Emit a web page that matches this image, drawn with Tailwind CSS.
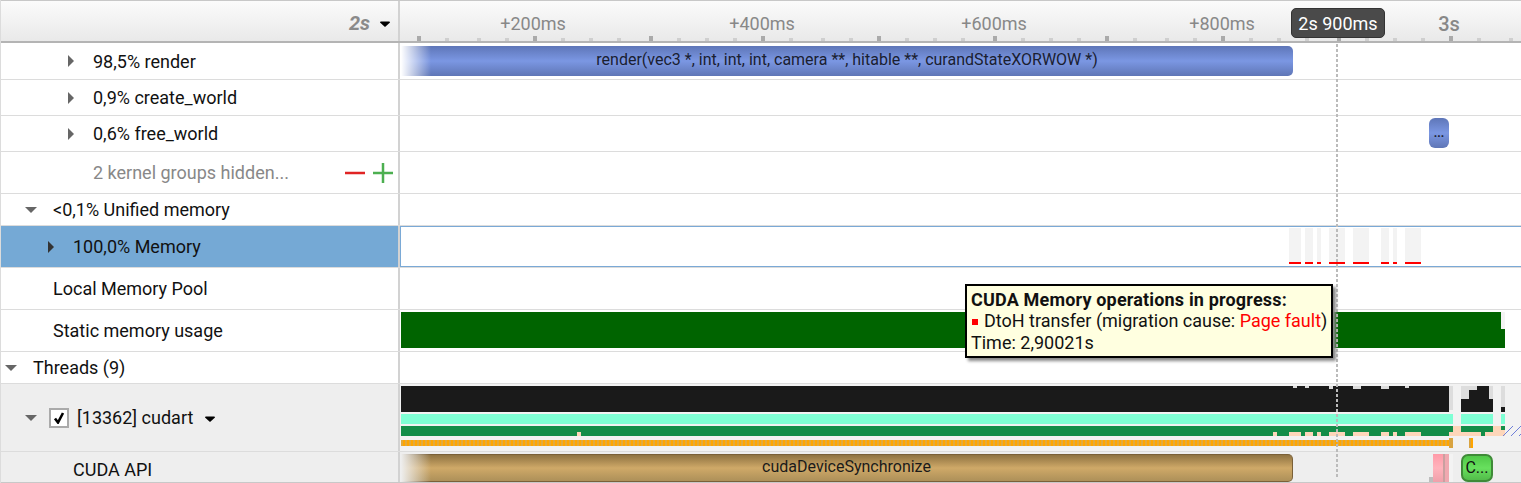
<!DOCTYPE html>
<html>
<head>
<meta charset="utf-8">
<script src="https://cdn.jsdelivr.net/npm/@tailwindcss/browser@4"></script>
</head>
<body class="bg-white">
<div class="relative w-[1521px] h-[483px] overflow-hidden border-l border-[#dcdcdc] font-[Roboto,sans-serif] text-[18px] text-[#111]">

  <!-- header -->
  <div class="flex h-[43px] border-t border-b-2 border-t-[#c8c8c8] border-b-[#b4b4b4] bg-gradient-to-b from-[#fbfbfb] to-[#e9e9e9]">
    <div class="flex w-[399px] items-center justify-end gap-[10px] border-r-2 border-[#d2d2d2] pr-[8px] pt-[3px]">
      <span class="text-[20px] font-bold italic text-[#8a8a8a]">2s</span>
      <svg class="mt-[2px]" width="10" height="6" viewBox="0 0 10 6"><path d="M0 1.5Q0 .5 1 .5H9Q10 .5 10 1.5L5 6Z" fill="#000"/></svg>
    </div>
    <div class="relative flex-1 text-[#888]">
      <span class="absolute left-[133px] top-[12px] -translate-x-1/2 leading-[22px]">+200ms</span>
      <span class="absolute left-[362px] top-[12px] -translate-x-1/2 leading-[22px]">+400ms</span>
      <span class="absolute left-[594px] top-[12px] -translate-x-1/2 leading-[22px]">+600ms</span>
      <span class="absolute left-[822px] top-[12px] -translate-x-1/2 leading-[22px]">+800ms</span>
      <span class="absolute left-[1049px] top-[12px] -translate-x-1/2 text-[20px] font-medium leading-[22px]">3s</span>
      <svg class="absolute bottom-0 left-0" width="1121" height="5" shape-rendering="crispEdges">
        <path fill="#aaaaaa" d="M17 0h4v5h-4zM133 0h4v5h-4zM249 0h4v5h-4zM361 0h4v5h-4zM477 0h4v5h-4zM593 0h4v5h-4zM705 0h4v5h-4zM821 0h4v5h-4zM937 0h4v5h-4zM1049 0h4v5h-4z"/>
        <path fill="#cfcfcf" d="M45 2h4v3h-4zM77 2h4v3h-4zM105 2h4v3h-4zM161 2h4v3h-4zM189 2h4v3h-4zM217 2h4v3h-4zM277 2h4v3h-4zM305 2h4v3h-4zM333 2h4v3h-4zM389 2h4v3h-4zM421 2h4v3h-4zM449 2h4v3h-4zM505 2h4v3h-4zM533 2h4v3h-4zM561 2h4v3h-4zM621 2h4v3h-4zM649 2h4v3h-4zM677 2h4v3h-4zM733 2h4v3h-4zM765 2h4v3h-4zM793 2h4v3h-4zM849 2h4v3h-4zM877 2h4v3h-4zM905 2h4v3h-4zM965 2h4v3h-4zM993 2h4v3h-4zM1021 2h4v3h-4zM1077 2h4v3h-4zM1109 2h4v3h-4z"/>
      </svg>
    </div>
  </div>

  <!-- render -->
  <div class="flex h-[37px] border-b border-[#dcdcdc]">
    <div class="flex w-[399px] items-center gap-[19px] border-r-2 border-[#d2d2d2] pl-[67px]">
      <svg width="6" height="12" viewBox="0 0 6 12"><path d="M0 0L6 6L0 12Z" fill="#666"/></svg>
      <span>98,5% render</span>
    </div>
    <div class="relative flex-1">
      <div class="absolute left-[1px] top-[3px] flex h-[30px] w-[892px] items-center justify-center rounded-r-[5px] bg-gradient-to-b from-[#5e76b8] via-[#7b97e3] to-[#5f76b6] pb-[3px] text-[16px] text-[#1a2030]">
        <span class="absolute inset-y-0 left-0 w-[30px] bg-gradient-to-r from-white to-white/0"></span>
        <span class="relative">render(vec3 *, int, int, int, camera **, hitable **, curandStateXORWOW *)</span>
      </div>
    </div>
  </div>

  <!-- create_world -->
  <div class="flex h-[36px] border-b border-[#dcdcdc]">
    <div class="flex w-[399px] items-center gap-[19px] border-r-2 border-[#d2d2d2] pl-[67px]">
      <svg width="6" height="12" viewBox="0 0 6 12"><path d="M0 0L6 6L0 12Z" fill="#666"/></svg>
      <span>0,9% create_world</span>
    </div>
    <div class="flex-1"></div>
  </div>

  <!-- free_world -->
  <div class="flex h-[36px] border-b border-[#dcdcdc]">
    <div class="flex w-[399px] items-center gap-[19px] border-r-2 border-[#d2d2d2] pl-[67px]">
      <svg width="6" height="12" viewBox="0 0 6 12"><path d="M0 0L6 6L0 12Z" fill="#666"/></svg>
      <span>0,6% free_world</span>
    </div>
    <div class="relative flex-1">
      <div class="absolute left-[1029px] top-[2px] flex h-[30px] w-[20px] items-center justify-center rounded-[6px] bg-gradient-to-b from-[#5e76b8] via-[#7b97e3] to-[#5f76b6] text-[12px] font-bold text-[#1a2030]">...</div>
    </div>
  </div>

  <!-- kernel groups -->
  <div class="flex h-[42px] border-b border-[#dcdcdc]">
    <div class="flex w-[399px] items-center border-r-2 border-[#d2d2d2] pl-[92px] pr-[5px] text-[#888]">
      <span class="flex-1">2 kernel groups hidden...</span>
      <svg class="mr-[8px]" width="20" height="20" viewBox="0 0 20 20"><rect y="8.75" width="20" height="2.5" fill="#e02424"/></svg>
      <svg width="20" height="20" viewBox="0 0 20 20"><path d="M0 8.75h8.75V0h2.5v8.75H20v2.5h-8.75V20h-2.5v-8.75H0z" fill="#4caf50"/></svg>
    </div>
    <div class="flex-1"></div>
  </div>

  <!-- unified memory -->
  <div class="flex h-[32px] border-b border-[#dcdcdc]">
    <div class="flex w-[399px] items-center gap-[16px] border-r-2 border-[#d2d2d2] pl-[24px]">
      <svg width="12" height="6" viewBox="0 0 12 6"><path d="M0 0H12L6 6Z" fill="#666"/></svg>
      <span>&lt;0,1% Unified memory</span>
    </div>
    <div class="flex-1"></div>
  </div>

  <!-- memory -->
  <div class="flex h-[42px] border-b border-[#dcdcdc]">
    <div class="flex w-[399px] items-center gap-[19px] border-r-2 border-[#d2d2d2] bg-[#75a9d5] pl-[47px]">
      <svg width="6" height="12" viewBox="0 0 6 12"><path d="M0 0L6 6L0 12Z" fill="#333"/></svg>
      <span>100,0% Memory</span>
    </div>
    <div class="relative flex-1 border-y border-l border-[#7aa9d6]">
      <svg class="absolute left-[-1px] top-[-1px]" width="1121" height="41" shape-rendering="crispEdges">
        <path fill="#f3f3f3" d="M889 2h12v34h-12zM905 2h8v34h-8zM917 2h4v34h-4zM929 2h16v34h-16zM953 2h16v34h-16zM981 2h8v34h-8zM993 2h4v34h-4zM1005 2h16v34h-16z"/>
        <path fill="#ff0000" d="M889 36h12v2h-12zM905 36h8v2h-8zM917 36h4v2h-4zM929 36h16v2h-16zM953 36h16v2h-16zM981 36h8v2h-8zM993 36h4v2h-4zM1005 36h16v2h-16z"/>
      </svg>
    </div>
  </div>

  <!-- local memory pool -->
  <div class="flex h-[42px] border-b border-[#dcdcdc]">
    <div class="flex w-[399px] items-center border-r-2 border-[#d2d2d2] pl-[52px]">Local Memory Pool</div>
    <div class="flex-1"></div>
  </div>

  <!-- static memory usage -->
  <div class="flex h-[42px] border-b border-[#dcdcdc]">
    <div class="flex w-[399px] items-center border-r-2 border-[#d2d2d2] pl-[52px]">Static memory usage</div>
    <div class="relative flex-1">
      <svg class="absolute left-0 top-0" width="1121" height="41" shape-rendering="crispEdges">
        <path fill="#f3f3f3" d="M1101 2h4v17h-4z"/>
        <path fill="#006400" d="M1 2h1100v17h4v19H1z"/>
      </svg>
    </div>
  </div>

  <!-- threads -->
  <div class="flex h-[32px] border-b border-[#dcdcdc]">
    <div class="flex w-[399px] items-center gap-[16px] border-r-2 border-[#d2d2d2] pl-[4px]">
      <svg width="12" height="6" viewBox="0 0 12 6"><path d="M0 0H12L6 6Z" fill="#666"/></svg>
      <span>Threads (9)</span>
    </div>
    <div class="flex-1"></div>
  </div>

  <!-- cudart -->
  <div class="flex h-[68px] border-b border-[#dcdcdc] bg-[#eeeeee]">
    <div class="flex w-[399px] items-center border-r-2 border-[#d2d2d2] pl-[24px]">
      <svg width="12" height="6" viewBox="0 0 12 6"><path d="M0 0H12L6 6Z" fill="#666"/></svg>
      <span class="ml-[12px] flex h-[20px] w-[20px] items-center justify-center border-2 border-[#aaaaaa] bg-white">
        <svg width="12" height="12" viewBox="0 0 12 12"><path d="M2 6.5L5 10.5L10 1" fill="none" stroke="#000" stroke-width="2.6"/></svg>
      </span>
      <span class="ml-[8px]">[13362] cudart</span>
      <svg class="ml-[12px] mt-[3px]" width="10" height="6" viewBox="0 0 10 6"><path d="M0 1.5Q0 .5 1 .5H9Q10 .5 10 1.5L5 6Z" fill="#000"/></svg>
    </div>
    <div class="relative flex-1 bg-[#f2f2f2]">
      <svg class="absolute left-0 top-0" width="1121" height="67" shape-rendering="crispEdges">
        <path fill="#1a1a1a" d="M1 2h1048v26H1zM1061 2h32v26h-32zM1101 23h4v5h-4z"/>
        <path fill="#dddddd" d="M893 2h4v2h-4zM905 2h4v2h-4zM929 2h4v3h-4zM953 2h8v3h-8zM981 2h8v3h-8zM1005 2h4v2h-4zM1049 2h4v24h-4zM1061 2h8v13h-8zM1069 2h8v4h-8zM1089 2h4v13h-4zM1101 2h4v21h-4z"/>
        <path fill="#7fffd4" d="M1 30h1052v10H1zM1061 30h32v10h-32zM1101 30h4v10h-4z"/>
        <path fill="#138d48" d="M1 42h1052v10H1zM1061 42h32v10h-32zM1101 42h4v4h-4z"/>
        <path fill="#fdd6ba" d="M177 48h4v4h-4zM873 48h4v4h-4zM889 48h12v4h-12zM905 48h8v4h-8zM917 48h4v4h-4zM929 48h16v4h-16zM953 48h16v4h-16zM981 48h8v4h-8zM993 48h4v4h-4zM1005 48h16v4h-16zM1049 48h32v4h-32zM1085 48h16v4h-16zM1053 42h8v6h-8zM1093 42h8v6h-8zM1101 46h4v6h-4z"/>
        <rect x="1" y="56" width="1048" height="6" fill="#e2a93c"/>
        <path fill="#d9a441" d="M1049 54h4v10h-4zM1069 54h2v10h-2z"/>
        <path fill="#ffa500" d="M1071 54h2v10h-2z"/>
      </svg>
      <div class="absolute left-[3px] top-[56px] h-[6px] w-[1046px] bg-[repeating-linear-gradient(90deg,#ffa500_0,#ffa500_2px,#e2a93c_2px,#e2a93c_4px)]"></div>
      <svg class="absolute left-[1103px] top-[42px]" width="18" height="10" viewBox="0 0 18 10"><path d="M0 10L10 0M8 10L18 0M16 10L18 8" stroke="#6f7fd8" stroke-width="1" fill="none"/></svg>
    </div>
  </div>

  <!-- cuda api -->
  <div class="flex h-[30px] bg-[#eeeeee]">
    <div class="flex w-[399px] items-center border-r-2 border-[#d2d2d2] pl-[72px] pt-[5px]">CUDA API</div>
    <div class="relative flex-1">
      <div class="absolute left-[1px] top-[2px] flex h-[28px] w-[892px] items-center justify-center rounded-r-[5px] border-y border-r border-[#7a6038] bg-gradient-to-b from-[#8f7342] via-[#cfa968] to-[#ad9059] pb-[2px] text-[16px] text-[#1a1a1a]">
        <span class="absolute inset-y-[-1px] left-0 w-[30px] bg-gradient-to-r from-[#eeeeee] to-[#eeeeee]/0"></span>
        <span class="relative">cudaDeviceSynchronize</span>
      </div>
      <div class="absolute left-[1029px] top-[25px] h-[5px] w-[4px] bg-[#bdbdbd]"></div>
      <div class="absolute left-[1033px] top-[2px] h-[28px] w-[10px] bg-gradient-to-b from-[#ff9aa8] via-[#ffb3bc] to-[#f0a0aa]"></div>
      <div class="absolute left-[1043px] top-[2px] h-[28px] w-[2px] bg-[#c9a0a0]"></div>
      <div class="absolute left-[1045px] top-[2px] h-[28px] w-[4px] bg-[#f0a8b0]"></div>
      <div class="absolute left-[1049px] top-[2px] h-[28px] w-[4px] bg-[#f3f3f3]"></div>
      <div class="absolute left-[1061px] top-[2px] flex h-[28px] w-[32px] items-center justify-center rounded-[7px] border-2 border-[#3f8a38] bg-gradient-to-b from-[#50c848] via-[#68e05e] to-[#52bc4a] text-[16px] text-[#111]">C...</div>
    </div>
  </div>

  <!-- bottom edge -->
  <div class="absolute bottom-0 left-0 h-px w-full bg-[#c8c8c8]"></div>

  <!-- cursor line -->
  <div class="absolute left-[1335px] top-[44px] h-[434px] w-[2px] bg-[repeating-linear-gradient(180deg,#bbbbbb_0,#bbbbbb_3px,transparent_3px,transparent_5px)]"></div>

  <!-- time badge -->
  <div class="absolute left-[1290px] top-[8px] flex h-[30px] w-[94px] items-center justify-center rounded-[5px] border border-[#333] bg-[#4a4a4a] text-[#fff]">2s 900ms</div>

  <!-- tooltip -->
  <div class="absolute left-[964px] top-[284px] h-[74px] w-[368px] border-2 border-black bg-[#ffffe0] pl-[5px] pt-[3px] text-[18px] leading-[21.5px] text-[#111] shadow-[3px_3px_3px_#888]">
    <div class="-ml-px font-bold tracking-[0.17px]">CUDA Memory operations in progress:</div>
    <div class="-mt-px flex items-center whitespace-nowrap"><span class="mr-[6px] mt-[3px] h-[6px] w-[6px] shrink-0 bg-[#ff0000]"></span><span>DtoH transfer (migration cause: <span class="text-[#ff0000]">Page fault</span>)</span></div>
    <div class="-ml-px mt-px">Time: 2,90021s</div>
  </div>
</div>
</body>
</html>
